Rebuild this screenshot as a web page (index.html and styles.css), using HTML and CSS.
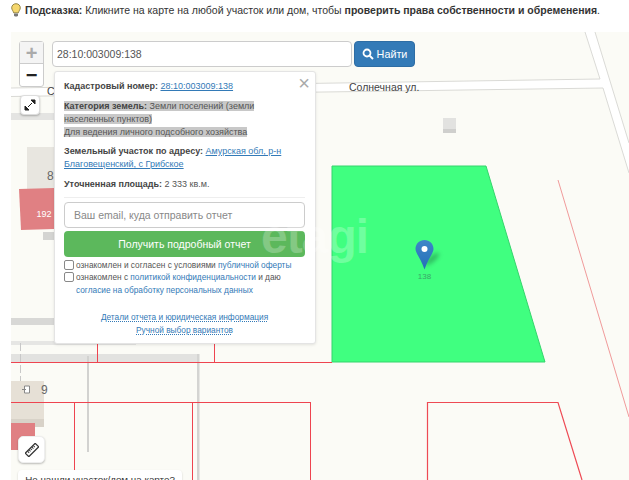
FILE: index.html
```html
<!DOCTYPE html>
<html lang="ru">
<head>
    <meta charset="UTF-8">
    <title>Проверка участка</title>
    <link rel="stylesheet" href="styles.css">
</head>
<body>
    <p class="hint">
        <svg class="hint-icon" width="10" height="14" viewBox="0 0 10 14">
            <path d="M5 .7C2.5.7.7 2.5.7 4.8c0 2 1.5 3 1.9 5h4.8c.4-2 1.900-3 1.900-5C9.300 2.500 7.500.7 5 .7z" fill="#f5d76e" stroke="#8a7a3a" stroke-width=".9"/>
            <path d="M3 10.500h4v2.200L6 13.600H4l-1-.9z" fill="#777"/>
        </svg>
        <span><b>Подсказка:</b> Кликните на карте на любой участок или дом, чтобы <b>проверить права собственности и обременения</b>.</span>
    </p>

    <div class="map">
        <svg class="map-layer" width="618" height="448" viewBox="11 32 618 448">
            <defs>
                <linearGradient id="pinFill" x1="0" y1="0" x2="0" y2="1">
                    <stop offset="0" stop-color="#3f86c8"/>
                    <stop offset="1" stop-color="#2470b8"/>
                </linearGradient>
            </defs>

            <!-- roads -->
            <polygon points="11,88 603,79 603,88 11,96" fill="#fff"/>
            <polygon points="585,32 595,32 629,143 629,173 600,79" fill="#fff"/>
            <path d="M11 88L600 79L585 32M595 32L629 143M11 96.500L603 88L629 173" fill="none" stroke="#dadad6"/>
            <rect x="11" y="113" width="43" height="7" fill="#e4e4e2"/>
            <rect x="11" y="318" width="43" height="7" fill="#d8d8d6"/>
            <rect x="11" y="341" width="125" height="4" fill="#e6e6e4"/>
            <rect x="11" y="354" width="188" height="8" fill="#e2e2e0"/>
            <rect x="197" y="354" width="2.500" height="126" fill="#d4d4d2"/>
            <rect x="87" y="356" width="2" height="96" fill="#d2d2d0"/>
            <path d="M20.500 343V385" stroke="#c8c8c8" stroke-dasharray="8 3"/>

            <!-- buildings -->
            <rect x="27" y="147" width="27" height="43" fill="#e8e6e0"/>
            <rect x="43" y="232" width="11" height="8" fill="#d4d4d2"/>
            <polygon points="19,189 54,188 54,229 21,230" fill="#e08083"/>
            <rect x="443" y="118" width="13" height="15" fill="#e2e2e0"/>
            <rect x="443" y="129" width="13" height="4" fill="#cfcfcd"/>
            <rect x="11" y="381" width="33" height="46" fill="#e6e0d6"/>
            <rect x="11" y="419" width="33" height="8" fill="#d8d2c8"/>
            <rect x="11" y="423" width="24" height="27" fill="#e08083"/>
            <path d="M22 389.500h4M24.500 386h5v7h-5z" fill="#fff" stroke="#888"/>

            <!-- parcels -->
            <polygon points="332,166 486,166 545,362 332,362" fill="#40ff80" stroke="#35d46c"/>
            <path d="M11 362.500H332M97.500 343V362M214.500 343V362M11 402.500H310M74.500 402V480M192.500 402V480M310.500 402V480" fill="none" stroke="#ee4450"/>
            <path d="M427.500 480V402.500H558L582 480" fill="none" stroke="#ee4a54" stroke-width="1.200"/>
            <path d="M558 180L629 417" fill="none" stroke="#f09a9a"/>

            <!-- labels -->
            <text class="map-label" x="349" y="91">Солнечная ул.</text>
            <text class="map-label" x="47" y="95">С</text>
            <text class="map-label map-num" x="47" y="180">8</text>
            <text class="map-label map-num" x="41" y="394">9</text>
            <text class="map-small" x="44" y="217">192</text>
            <text class="map-pin-label" x="424.500" y="279">138</text>

            <!-- pin -->
            <ellipse class="pin-shadow" cx="432" cy="259" rx="9" ry="3" transform="rotate(-40 432 259)"/>
            <path d="M424.500 269.500C421 259 415.500 253 415.500 249c0-5.200 4-9 9-9s9 3.800 9 9c0 4-5.500 10-9 20.500z" fill="url(#pinFill)"/>
            <circle cx="424.500" cy="249" r="3" fill="#fff"/>
        </svg>

        <div class="zoom-box">
            <span class="zoom-btn zoom-off">+</span>
            <span class="zoom-btn">−</span>
        </div>

        <div class="search">
            <input class="search-input" type="text" value="28:10:003009:138">
            <button class="search-btn">
                <svg width="12" height="12" viewBox="0 0 12 12"><circle cx="5" cy="5" r="3.500" fill="none" stroke="#fff" stroke-width="1.800"/><path d="M7.600 7.600L11 11" stroke="#fff" stroke-width="2"/></svg>
                Найти
            </button>
        </div>

        <button class="tool-btn tool-full">
            <svg width="12" height="12" viewBox="0 0 12 12"><path d="M7 1h4v4zM5 11H1V7zM8 4L4 8" fill="#222" stroke="#222"/></svg>
        </button>

        <div class="popup">
            <span class="popup-close">×</span>
            <p class="row"><b>Кадастровый номер:</b> <a href="#">28:10:003009:138</a></p>
            <p class="row"><span class="mark"><b>Категория земель:</b> Земли поселений (земли населенных пунктов)</span><br><span class="mark">Для ведения личного подсобного хозяйства</span></p>
            <p class="row"><b>Земельный участок по адресу:</b> <a href="#">Амурская обл, р-н Благовещенский, с Грибское</a></p>
            <p class="row row-last"><b>Уточненная площадь:</b> 2 333 кв.м.</p>
            <input class="email" type="text" placeholder="Ваш email, куда отправить отчет">
            <button class="report-btn">Получить подробный отчет</button>
            <label class="check"><i class="box"></i><span>ознакомлен и согласен с условиями <em>публичной оферты</em></span></label>
            <label class="check"><i class="box"></i><span>ознакомлен с <em>политикой конфиденциальности</em> и даю <em>согласие на обработку персональных данных</em></span></label>
            <div class="popup-links">
                <a href="#">Детали отчета и юридическая информация</a>
                <a href="#">Ручной выбор вариантов</a>
            </div>
        </div>

        <div class="watermark">etagi</div>

        <button class="tool-btn tool-ruler">
            <svg width="14" height="14" viewBox="0 0 14 14"><g transform="rotate(-45 7 7)"><rect x="0" y="4.500" width="14" height="5" fill="none" stroke="#333" stroke-width="1.200"/><path d="M3 5v2M5 5v2M7 5v2M9 5v2M11 5v2" stroke="#333"/></g></svg>
        </button>

        <div class="tip">Не нашли участок/дом на карте?</div>
    </div>
</body>
</html>
```

FILE: styles.css
```css
* {
    box-sizing: border-box;
}

body {
    margin: 0;
    height: 480px;
    overflow: hidden;
    font-family: "Liberation Sans", Arial, sans-serif;
    font-size: 11px;
    color: #333;
    background-color: #fff;
}

.hint {
    display: flex;
    align-items: center;
    gap: 4px;
    height: 32px;
    margin: 0;
    padding: 0 0 13px 11px;
    font-size: 10.500px;
    white-space: nowrap;
}

.hint-icon {
    flex-shrink: 0;
}

.map {
    position: relative;
    height: 448px;
    margin-left: 11px;
    overflow: hidden;
    background-color: #fbfbf6;
}

.map-layer {
    position: absolute;
    left: 0;
    top: 0;
}

.map-label {
    font-size: 10.500px;
    fill: #444;
}

.map-num {
    font-size: 12px;
    fill: #666;
}

.map-small {
    font-size: 9px;
    fill: #fff;
    text-anchor: middle;
}

.map-pin-label {
    font-size: 8px;
    fill: #3aa868;
    text-anchor: middle;
}

.pin-shadow {
    fill: #1c6a3c;
    opacity: 0.45;
    filter: blur(2px);
}

.zoom-box {
    position: absolute;
    left: 8px;
    top: 9px;
    width: 25px;
    display: flex;
    flex-direction: column;
    background-color: #fff;
    border: 1px solid #ccc;
    border-radius: 3px;
}

.zoom-btn {
    height: 22px;
    font-size: 20px;
    line-height: 22px;
    font-weight: bold;
    text-align: center;
    color: #222;
}

.zoom-off {
    color: #aaa;
    background-color: #f4f4f4;
    border-bottom: 1px solid #ccc;
}

.search {
    position: absolute;
    left: 41px;
    top: 9px;
    display: flex;
    gap: 2px;
}

.search-input {
    width: 300px;
    height: 26px;
    padding: 0 4px;
    font: 10.500px "Liberation Sans", Arial, sans-serif;
    color: #555;
    background-color: #fff;
    border: 1px solid #ccc;
    border-radius: 4px;
}

.search-btn {
    display: flex;
    align-items: center;
    justify-content: center;
    gap: 3px;
    width: 61px;
    height: 26px;
    padding: 0;
    font: 10.800px "Liberation Sans", Arial, sans-serif;
    color: #fff;
    background-color: #337ab7;
    border: 1px solid #2e6da4;
    border-radius: 4px;
}

.tool-btn {
    position: absolute;
    display: flex;
    align-items: center;
    justify-content: center;
    padding: 0;
    background-color: #fff;
    border: 1px solid #ddd;
    border-radius: 4px;
    box-shadow: 0 1px 2px rgba(0, 0, 0, 0.25);
}

.tool-full {
    left: 9px;
    top: 63px;
    width: 20px;
    height: 20px;
}

.tool-ruler {
    left: 7px;
    top: 404px;
    width: 27px;
    height: 27px;
    border-color: #eee;
    border-radius: 5px;
}

.popup {
    position: absolute;
    left: 43px;
    top: 39px;
    width: 262px;
    height: 273px;
    padding: 8px 10px 0 9px;
    font-size: 9px;
    line-height: 13px;
    color: #555;
    background-color: #fff;
    border: 1px solid #e4e4e4;
    border-radius: 3px;
    box-shadow: 0 1px 3px rgba(0, 0, 0, 0.1);
}

.popup-close {
    position: absolute;
    right: 5px;
    top: 2px;
    font-size: 20px;
    line-height: 18px;
    color: #aaa;
}

.row {
    margin: 0 0 6.500px;
}

.row b {
    color: #444;
}

.row a,
.popup-links a {
    color: #337ab7;
}

.row-last {
    margin-bottom: 4px;
    padding-bottom: 6px;
    border-bottom: 1px solid #eee;
}

.mark {
    background-color: #c8c8c8;
}

.email {
    display: block;
    width: 241px;
    height: 26px;
    padding: 0 9px;
    font: 10.500px "Liberation Sans", Arial, sans-serif;
    background-color: #fff;
    border: 1px solid #ccc;
    border-radius: 4px;
}

.email::placeholder {
    color: #888;
}

.report-btn {
    display: block;
    width: 241px;
    height: 26px;
    margin: 3px 0 2px;
    padding: 0;
    font: 10.500px "Liberation Sans", Arial, sans-serif;
    color: #fff;
    background-color: #5cb85c;
    border: 0;
    border-radius: 4px;
}

.check {
    display: flex;
    gap: 2px;
    font-size: 8.300px;
    line-height: 12.500px;
    color: #555;
}

.check em {
    font-style: normal;
    color: #337ab7;
}

.box {
    flex-shrink: 0;
    width: 10px;
    height: 10px;
    margin-top: 1px;
    background-color: #fff;
    border: 1px solid #888;
    border-radius: 2px;
}

.popup-links {
    display: flex;
    flex-direction: column;
    align-items: center;
    margin-top: 15px;
    font-size: 8.300px;
}

.popup-links a {
    text-decoration-style: dotted;
}

.watermark {
    position: absolute;
    left: 250px;
    top: 177px;
    font-size: 48px;
    font-weight: bold;
    letter-spacing: -1px;
    color: rgba(255, 255, 255, 0.25);
}

.tip {
    position: absolute;
    left: 7px;
    top: 438px;
    width: 164px;
    height: 30px;
    padding: 4px 0;
    font-size: 9.800px;
    text-align: center;
    background-color: #fff;
    border-radius: 4px;
    box-shadow: 0 1px 2px rgba(0, 0, 0, 0.2);
}
```
